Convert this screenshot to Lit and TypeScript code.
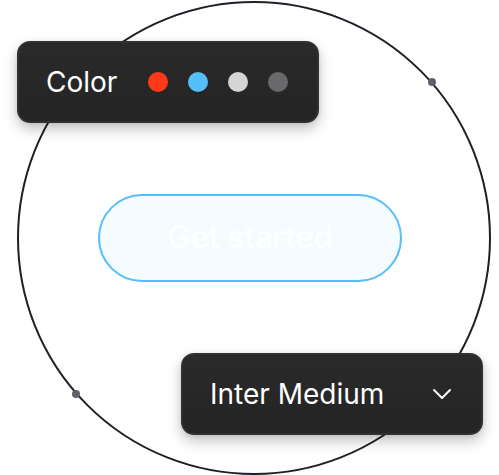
import { LitElement, html, css } from "lit";
import { customElement, state } from "lit/decorators.js";

@customElement("app-root")
export class AppRoot extends LitElement {
  @state() private colors = ["red", "blue", "light", "gray"];

  static styles = css`
    :host {
      display: block;
      background: #fff;
      font-family: Inter, "Liberation Sans", sans-serif;
    }
    * {
      box-sizing: border-box;
    }
    .stage {
      position: relative;
      display: flex;
      flex-direction: column;
      gap: 71px;
      padding: 41px 16px 40px 17px;
      overflow: hidden;
    }
    .orbit {
      position: absolute;
      inset: 0;
      width: 100%;
      height: 100%;
    }
    .panel {
      position: relative;
      display: flex;
      align-items: center;
      width: 302px;
      max-width: 100%;
      height: 82px;
      margin: 0;
      border: 2px solid #2f3031;
      border-radius: 13px;
      background: linear-gradient(#2a2a2b, #242425);
      box-shadow: 0 6px 14px rgba(0, 0, 0, 0.24), 0 1px 4px rgba(0, 0, 0, 0.08);
      color: #fff;
      font-size: 28px;
      line-height: 36px;
    }
    .colors {
      align-self: flex-start;
      justify-content: space-between;
      padding: 0 29px 0 27px;
    }
    .swatches {
      display: flex;
      gap: 20px;
    }
    .swatch {
      appearance: none;
      width: 20px;
      height: 20px;
      margin: 0;
      border-radius: 50%;
      cursor: pointer;
    }
    .red { background: #ff3a1a; }
    .blue { background: #54bff8; }
    .light { background: #d5d5d6; }
    .gray { background: #69696b; }
    .cta {
      position: relative;
      align-self: center;
      width: 304px;
      max-width: 100%;
      height: 88px;
      padding: 0 0 2px;
      border: 2px solid #54bff8;
      border-radius: 44px;
      background: #f4fcff;
      color: #fff;
      font: 500 31px/36px Inter, "Liberation Sans", sans-serif;
      cursor: pointer;
    }
    .font {
      align-self: flex-end;
    }
    .select {
      appearance: none;
      width: 100%;
      height: 100%;
      padding: 0 64px 0 27px;
      border: 0;
      border-radius: 11px;
      background: transparent;
      color: inherit;
      font: inherit;
      cursor: pointer;
    }
    .chevron {
      position: absolute;
      right: 29px;
      width: 20px;
      height: 12px;
      pointer-events: none;
    }
  `;

  render() {
    return html`
      <main class="stage">
        <svg class="orbit" viewBox="0 0 499 475" aria-hidden="true">
          <circle cx="254" cy="238" r="236" fill="none" stroke="#1f1f27" stroke-width="2" />
          <circle cx="432" cy="82" r="4" fill="#5f606a" />
          <circle cx="76" cy="394" r="4" fill="#5f606a" />
        </svg>
        <div class="panel colors" role="radiogroup" aria-labelledby="color-label">
          <span id="color-label">Color</span>
          <div class="swatches">
            ${this.colors.map(
              (c) => html`<input class="swatch ${c}" type="radio" name="color" value=${c} aria-label=${c} />`
            )}
          </div>
        </div>
        <button class="cta" type="button">Get started</button>
        <div class="panel font">
          <select class="select" aria-label="Font">
            <option>Inter Medium</option>
          </select>
          <svg class="chevron" viewBox="0 0 20 12" aria-hidden="true">
            <path d="M2 2l8 8 8-8" fill="none" stroke="#fff" stroke-width="2" stroke-linecap="round" stroke-linejoin="round" />
          </svg>
        </div>
      </main>
    `;
  }
}
